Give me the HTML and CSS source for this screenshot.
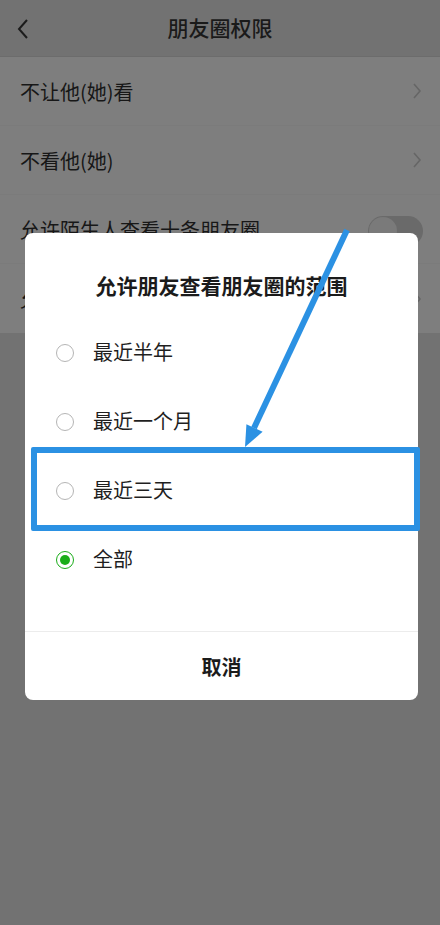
FILE: index.html
```html
<!DOCTYPE html>
<html lang="zh">
<head>
<meta charset="utf-8">
<link rel="stylesheet" href="styles.css">
</head>
<body>
<div class="page">
  <header class="topbar">
    <svg class="back" width="14" height="22" viewBox="0 0 14 22"><path d="M11 2 L3 11 L11 20" fill="none" stroke="#1c1c1c" stroke-width="2"/></svg>
    <div class="title">朋友圈权限</div>
  </header>
  <div class="list">
    <div class="row"><span>不让他(她)看</span><svg class="chev" width="10" height="18" viewBox="0 0 10 18"><path d="M2 2 L8 9 L2 16" fill="none" stroke="#666" stroke-width="1.6"/></svg></div>
    <div class="row"><span>不看他(她)</span><svg class="chev" width="10" height="18" viewBox="0 0 10 18"><path d="M2 2 L8 9 L2 16" fill="none" stroke="#666" stroke-width="1.6"/></svg></div>
    <div class="row"><span>允许陌生人查看十条朋友圈</span><div class="toggle"><div class="knob"></div></div></div>
    <div class="row"><span>允许朋友查看朋友圈的范围</span><svg class="chev" width="10" height="18" viewBox="0 0 10 18"><path d="M2 2 L8 9 L2 16" fill="none" stroke="#666" stroke-width="1.6"/></svg></div>
  </div>

  <div class="dialog">
    <div class="dtitle">允许朋友查看朋友圈的范围</div>
    <div class="opts">
      <div class="opt"><span class="radio"></span><span>最近半年</span></div>
      <div class="opt"><span class="radio"></span><span>最近一个月</span></div>
      <div class="opt"><span class="radio"></span><span>最近三天</span></div>
      <div class="opt"><span class="radio on"></span><span>全部</span></div>
    </div>
    <div class="cancel">取消</div>
  </div>

  <div class="highlight"></div>
  <svg class="arrow" width="440" height="925" viewBox="0 0 440 925">
    <line x1="347" y1="230" x2="254" y2="428" stroke="#2b91e3" stroke-width="6"/>
    <polygon points="245,447 262.6,431.8 246.4,424.2" fill="#2b91e3"/>
  </svg>
</div>
</body>
</html>
```
FILE: styles.css
```css
html, body {
  margin: 0;
  padding: 0;
}
body {
  background: #727272;
  font-family: "Noto Sans CJK SC", "Noto Sans", sans-serif;
}
.page {
  position: relative;
  width: 440px;
  height: 925px;
  overflow: hidden;
  background: #727272;
}
.topbar {
  height: 56px;
  display: flex;
  align-items: center;
  justify-content: center;
  position: relative;
  border-bottom: 1px solid #6c6c6c;
}
.back {
  position: absolute;
  left: 16px;
  top: 18px;
}
.title {
  font-size: 21px;
  font-weight: 500;
  color: #1a1a1a;
  margin-top: -2px;
}
.list {
  background: #7e7e7e;
}
.row {
  height: 69px;
  display: flex;
  align-items: center;
  justify-content: space-between;
  padding: 0 20px 0 20px;
  box-sizing: border-box;
  border-bottom: 1px solid #7b7b7b;
  font-size: 20px;
  color: #171717;
}
.row:last-child {
  border-bottom: none;
}
.chev {
  margin-right: -2px;
}
.toggle {
  width: 55px;
  height: 30px;
  border-radius: 15px;
  background: #6a6a6a;
  margin-right: -3px;
  margin-top: 4px;
  position: relative;
}
.knob {
  position: absolute;
  left: 1px;
  top: 1px;
  width: 28px;
  height: 28px;
  border-radius: 50%;
  background: #7a7a7a;
}
.dialog {
  position: absolute;
  left: 25px;
  top: 233px;
  width: 393px;
  height: 467px;
  background: #fff;
  border-radius: 8px;
  display: flex;
  flex-direction: column;
}
.dtitle {
  height: 85px;
  box-sizing: border-box;
  padding-top: 37px;
  text-align: center;
  font-size: 21px;
  font-weight: 700;
  color: #1b1b1b;
  line-height: 30px;
}
.opts {
  display: flex;
  flex-direction: column;
  height: 313px;
}
.opt {
  height: 69px;
  flex: none;
  display: flex;
  align-items: center;
  padding-left: 31px;
  font-size: 20px;
  color: #1f1f1f;
}
.opt span:last-child {
  margin-top: -2px;
}
.radio {
  width: 16px;
  height: 16px;
  border: 1.5px solid #b5b5b5;
  border-radius: 50%;
  margin-right: 19px;
  box-sizing: content-box;
  position: relative;
}
.radio.on {
  border-color: #1aad19;
  background: #fff;
}
.radio.on::after {
  content: "";
  position: absolute;
  left: 3px;
  top: 3px;
  width: 10px;
  height: 10px;
  border-radius: 50%;
  background: #1aad19;
}
.cancel {
  flex: 1;
  border-top: 1px solid #ececec;
  display: flex;
  align-items: center;
  justify-content: center;
  font-size: 20px;
  font-weight: 700;
  color: #1b1b1b;
}
.highlight {
  position: absolute;
  left: 31px;
  top: 447px;
  width: 389px;
  height: 84px;
  box-sizing: border-box;
  border: 6px solid #2b91e3;
  border-radius: 2px;
}
.arrow {
  position: absolute;
  left: 0;
  top: 0;
}
```
